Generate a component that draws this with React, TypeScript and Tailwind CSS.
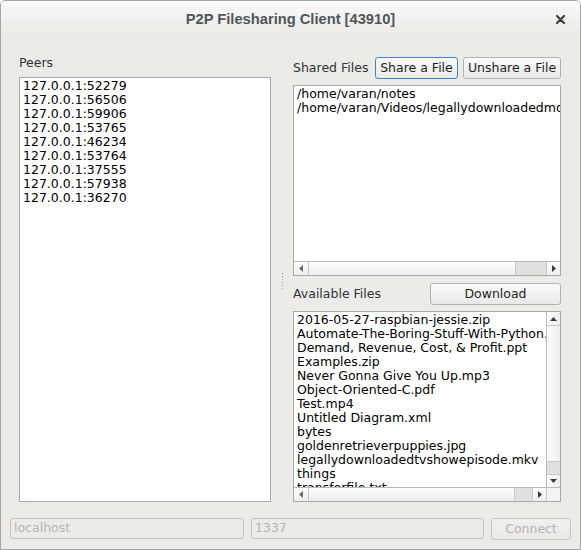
import React from "react";

const peers = [
  "127.0.0.1:52279",
  "127.0.0.1:56506",
  "127.0.0.1:59906",
  "127.0.0.1:53765",
  "127.0.0.1:46234",
  "127.0.0.1:53764",
  "127.0.0.1:37555",
  "127.0.0.1:57938",
  "127.0.0.1:36270",
];

const shared = ["/home/varan/notes", "/home/varan/Videos/legallydownloadedmovie.mp4"];

const available = [
  "2016-05-27-raspbian-jessie.zip",
  "Automate-The-Boring-Stuff-With-Python.pdf",
  "Demand, Revenue, Cost, & Profit.ppt",
  "Examples.zip",
  "Never Gonna Give You Up.mp3",
  "Object-Oriented-C.pdf",
  "Test.mp4",
  "Untitled Diagram.xml",
  "bytes",
  "goldenretrieverpuppies.jpg",
  "legallydownloadedtvshowepisode.mkv",
  "things",
  "transferfile.txt",
];

// small scrollbar arrow
function Tri({ dir, light }: { dir: "left" | "right" | "up" | "down"; light?: boolean }) {
  const pts = {
    left: "4,0 4,7 0,3.5",
    right: "0,0 0,7 4,3.5",
    up: "0,4 7,4 3.5,0",
    down: "0,0 7,0 3.5,4",
  }[dir];
  const horiz = dir === "left" || dir === "right";
  return (
    <svg width={horiz ? 4 : 7} height={horiz ? 7 : 4} viewBox={horiz ? "0 0 4 7" : "0 0 7 4"}>
      <polygon points={pts} fill={light ? "#6a6a6a" : "#3a3a3a"} />
    </svg>
  );
}

function HScroll({ thumb, corner }: { thumb: number; corner?: boolean }) {
  return (
    <div className="flex h-[14px] shrink-0 border-t border-[#b9b9b9] bg-gradient-to-b from-[#fdfdfd] to-[#eeeeee]">
      <div className="flex w-[15px] items-center justify-center border-r border-[#c8c8c8]">
        <Tri dir="left" light />
      </div>
      <div className="flex flex-1 justify-end">
        <div className="border-l border-[#c8c8c8] bg-[#e0e0de]" style={{ width: thumb }} />
      </div>
      <div className="flex w-[14px] items-center justify-center border-l border-[#c8c8c8]">
        <Tri dir="right" />
      </div>
      {corner && <div className="w-[14px] border-l border-[#c8c8c8] bg-[#f3f3f3]" />}
    </div>
  );
}

function VScroll() {
  return (
    <div className="flex w-[14px] shrink-0 flex-col border-l border-[#b9b9b9] bg-gradient-to-r from-[#fdfdfd] to-[#eeeeee]">
      <div className="flex h-[14px] items-center justify-center border-b border-[#c8c8c8]">
        <Tri dir="up" />
      </div>
      <div className="flex flex-1 flex-col justify-end">
        <div className="h-[13px] border-t border-[#c8c8c8] bg-[#e0e0de]" />
      </div>
      <div className="flex h-[13px] items-center justify-center border-t border-[#c8c8c8]">
        <Tri dir="down" />
      </div>
    </div>
  );
}

function Button({ children, focus, disabled, className }: { children: React.ReactNode; focus?: boolean; disabled?: boolean; className?: string }) {
  return (
    <div
      className={
        "flex h-[22px] items-center justify-center rounded-[3px] border bg-gradient-to-b " +
        (disabled
          ? "border-[#c9c7c3] from-[#f2f1ef] to-[#ebe9e6] text-[#b3b3b1] "
          : focus
          ? "border-[#3e85c9] from-[#fbfbfb] to-[#ebebeb] text-[#1e1e1e] "
          : "border-[#b3b3b3] from-[#fbfbfb] to-[#e8e8e8] text-[#1e1e1e] ") +
        (className ?? "")
      }
    >
      {children}
    </div>
  );
}

function Rows({ items }: { items: string[] }) {
  return (
    <div className="flex-1 overflow-hidden pl-[3px] pt-px leading-[14px] text-black">
      {items.map((t) => (
        <div key={t} className="whitespace-nowrap">
          {t}
        </div>
      ))}
    </div>
  );
}

export default function App() {
  return (
    <div
      className="flex h-[550px] w-[581px] flex-col overflow-hidden rounded-t-[5px] border border-[#a5a5a5] bg-[#edebe8] text-[12.5px] text-[#2e3436]"
      style={{ fontFamily: '"DejaVu Sans", sans-serif' }}
    >
      {/* Title bar */}
      <div className="grid h-[37px] shrink-0 grid-cols-[1fr_auto_1fr] items-center bg-gradient-to-b from-[#f9f9f8] to-[#ebe9e6]">
        <div />
        <div
          className="text-[14.7px] font-bold text-[#4f565b]"
          style={{ fontFamily: '"Liberation Sans", sans-serif' }}
        >
          P2P Filesharing Client [43910]
        </div>
        <div className="flex justify-end pr-[15px]">
          <svg width="9" height="9" viewBox="0 0 9 9">
            <path d="M1 1 L8 8 M8 1 L1 8" stroke="#3b3f42" strokeWidth="2.2" strokeLinecap="round" />
          </svg>
        </div>
      </div>

      {/* Main split */}
      <div className="flex flex-1 pl-[18px] pr-[19px] pt-[18px]">
        {/* Peers */}
        <div className="flex w-[252px] flex-col">
          <div className="h-[14px] leading-[14px]">Peers</div>
          <div className="mt-[7px] flex h-[425px] flex-col border border-[#a9a9a9] bg-white">
            <Rows items={peers} />
          </div>
        </div>

        {/* splitter handle */}
        <div className="flex w-[22px] flex-col items-center justify-center gap-[2px] pb-[12px]">
          {[0, 1, 2, 3, 4, 5].map((i) => (
            <div key={i} className="h-px w-px bg-[#9a9a9a]" />
          ))}
        </div>

        {/* Files */}
        <div className="flex w-[268px] flex-col pt-px">
          <div className="flex h-[22px] items-center">
            <div className="flex-1">Shared Files</div>
            <Button focus className="w-[83px]">Share a File</Button>
            <Button className="ml-[5px] w-[98px]">Unshare a File</Button>
          </div>
          <div className="mt-[6px] flex h-[191px] flex-col border border-[#a9a9a9] bg-white">
            <Rows items={shared} />
            <HScroll thumb={31} />
          </div>

          <div className="mt-[7px] flex h-[22px] items-center">
            <div className="flex-1">Available Files</div>
            <Button className="w-[131px]">Download</Button>
          </div>
          <div className="mt-[6px] flex h-[191px] flex-col border border-[#a9a9a9] bg-white">
            <div className="flex flex-1 overflow-hidden">
              <Rows items={available} />
              <VScroll />
            </div>
            <HScroll thumb={18} corner />
          </div>
        </div>
      </div>

      {/* Connection bar */}
      <div className="mb-[10px] flex h-[21px] shrink-0 gap-[7px] px-[9px] text-[#b5b5b3]">
        <div className="flex w-[234px] items-center rounded-[3px] border border-[#c4c2be] pl-[3px]">localhost</div>
        <div className="flex w-[233px] items-center rounded-[3px] border border-[#c4c2be] pl-[3px]">1337</div>
        <Button disabled className="h-[21px] w-[80px]">Connect</Button>
      </div>
    </div>
  );
}
